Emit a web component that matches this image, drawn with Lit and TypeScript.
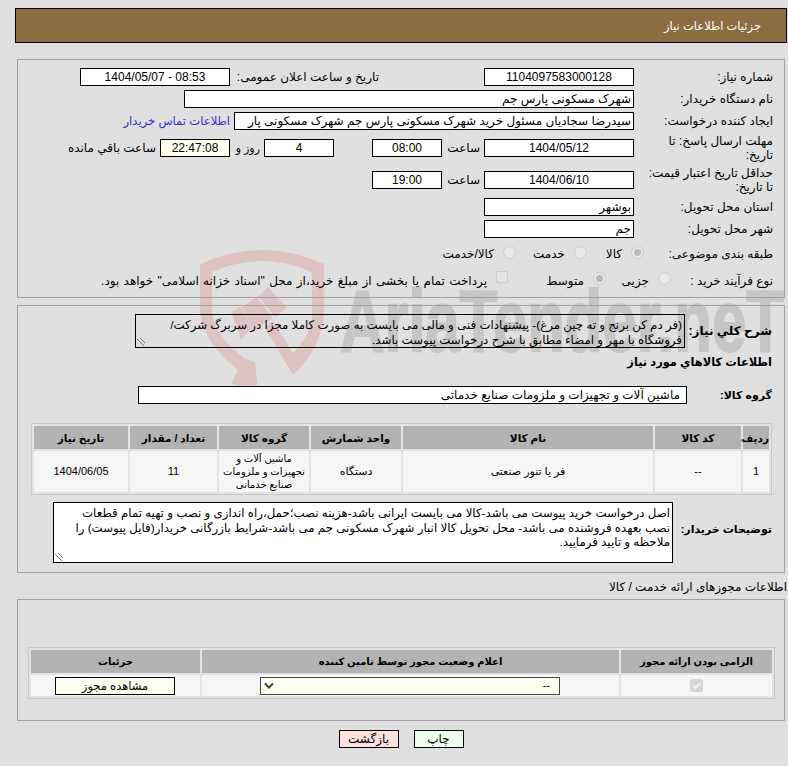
import { LitElement, html, css, svg } from "lit";
import { customElement } from "lit/decorators.js";

const goodsHead = ["ردیف", "کد کالا", "نام کالا", "واحد شمارش", "گروه کالا", "تعداد / مقدار", "تاریخ نیاز"];

@customElement("app-root")
export class AppRoot extends LitElement {
  static styles = css`
    :host {
      display: block;
      position: relative;
      width: 788px;
      height: 766px;
      overflow: hidden;
      background: #e0e0e0;
      font-family: "Liberation Sans", "DejaVu Sans", Tahoma, sans-serif;
      font-size: 12px;
      color: #000;
      direction: rtl;
    }
    .page {
      position: relative;
      display: flex;
      flex-direction: column;
      padding: 8px 1px 0 15px;
    }
    .header {
      height: 35px;
      box-sizing: border-box;
      background: #8c6d42;
      border: 1px solid #000;
      color: #fff;
      display: flex;
      align-items: center;
      padding-right: 25px;
      font-size: 11.5px;
    }
    .box {
      border: 1px solid #a0a0a0;
      margin: 0 2px;
      box-sizing: border-box;
    }
    .box1 {
      margin-top: 16px;
      height: 239px;
      padding-top: 6px;
    }
    .row {
      display: flex;
      align-items: center;
      height: 22px;
    }
    .row-tall { height: 32px; }
    .label {
      width: 150px;
      flex: none;
      box-sizing: border-box;
      padding: 0 11px 0 13px;
      line-height: 14px;
    }
    .field {
      background: #fff;
      border: 1px solid #000;
      height: 18px;
      box-sizing: border-box;
      line-height: 17px;
      white-space: nowrap;
      overflow: hidden;
      padding: 0 2px;
      flex: none;
    }
    .center { text-align: center; }
    .ltr { direction: ltr; }
    .w150 { width: 150px; }
    .w70 { width: 70px; }
    .buyer { width: 450px; }
    .creator { width: 400px; }
    .cream { background: #fffff0; }
    .spacer-announce { width: 105px; flex: none; }
    .announce { width: 149px; flex: none; white-space: nowrap; }
    .link { color: #3333cc; margin-right: 4px; white-space: nowrap; font-size: 11.6px; }
    .unit { width: 42px; box-sizing: border-box; padding-right: 4px; flex: none; }
    .gap38 { width: 38px; flex: none; }
    .days { width: 34px; box-sizing: border-box; padding-right: 4px; flex: none; white-space: nowrap; font-size: 11px; }
    .remain { margin-right: 4px; white-space: nowrap; }
    .row-kind { margin-top: 3px; }
    .row-process { margin-top: 5px; }
    .label-kind { width: 140px; }
    .label-process { width: 113px; padding-left: 0; white-space: nowrap; }
    .radio {
      width: 13px;
      height: 13px;
      border-radius: 50%;
      background: #e8e8e8;
      border: 1px solid #cdcdcd;
      box-sizing: border-box;
      flex: none;
      position: relative;
      top: -2px;
    }
    .row-process .radio { top: -3px; }
    .radio.on::after {
      content: "";
      position: absolute;
      inset: 2px;
      border-radius: 50%;
      background: #b9b9b9;
    }
    .opt { flex: none; box-sizing: border-box; padding-right: 9px; white-space: nowrap; }
    .o44 { width: 44px; }
    .o58 { width: 58px; }
    .o52 { width: 52px; }
    .o85 { width: 85px; }
    .check {
      width: 12px;
      height: 12px;
      border-radius: 2px;
      background: #e4e4e4;
      border: 1px solid #cdcdcd;
      box-sizing: border-box;
      flex: none;
      position: relative;
      top: -4px;
    }
    .pay { margin-right: 9px; white-space: nowrap; word-spacing: 1px; }
    .box2 {
      margin-top: 7px;
      height: 268px;
      padding-top: 8px;
    }
    .desc-row { display: flex; align-items: center; }
    .desc-label {
      flex: none;
      font-weight: bold;
      box-sizing: border-box;
      padding-right: 12px;
      white-space: nowrap;
    }
    .dl-short { width: 99px; }
    .dl-long { width: 111px; font-size: 11px; }
    .area {
      position: relative;
      border: 1px solid #000;
      box-sizing: border-box;
      font-size: 11.8px;
      line-height: 14.5px;
      padding: 3px 2px 0 2px;
      flex: none;
      white-space: nowrap;
    }
    .area.short { width: 550px; height: 34px; }
    .area.long { width: 620px; height: 61px; margin-top: 7px; background: #fff; }
    .grip {
      position: absolute;
      left: 1px;
      bottom: 1px;
      width: 8px;
      height: 8px;
    }
    .goods-title {
      font-weight: bold;
      font-size: 11.4px;
      padding-right: 12px;
      margin-top: 6px;
      line-height: 16px;
    }
    .group-row {
      display: flex;
      align-items: center;
      margin-top: 16px;
    }
    .group-label {
      width: 97px;
      box-sizing: border-box;
      padding-right: 12px;
      flex: none;
      font-weight: bold;
      font-size: 11px;
    }
    .group-field {
      width: 549px;
      height: 18px;
      box-sizing: border-box;
      background: #fff;
      border: 1px solid #000;
      line-height: 17px;
      padding-right: 6px;
    }
    .table {
      border: 1px solid #c8c8c8;
      border-spacing: 2px;
      border-collapse: separate;
      background: #e4e4e4;
      table-layout: fixed;
      font-size: 11px;
    }
    .table th {
      background: #b3b3b3;
      font-size: 10.5px;
      padding: 0;
      height: 23px;
      text-align: center;
    }
    .table td {
      background: #f6f6f6;
      text-align: center;
      padding: 0;
      line-height: 13px;
    }
    .goods {
      width: 741px;
      margin: 19px 12px 0 0;
    }
    .goods td { height: 41px; }
    .goods col:nth-child(1) { width: 26px; }
    .goods col:nth-child(2) { width: 86px; }
    .goods col:nth-child(3) { width: 250px; }
    .goods col:nth-child(4) { width: 90px; }
    .goods col:nth-child(5) { width: 90px; }
    .goods col:nth-child(6) { width: 87px; }
    .goods col:nth-child(7) { width: 94px; }
    .goods td.group { font-size: 10px; white-space: nowrap; }
    .subtitle {
      margin: 6px 0 4px 0;
      line-height: 16px;
    }
    .box3 {
      height: 122px;
      padding-top: 47px;
    }
    .licence {
      width: 747px;
      margin-right: 9px;
    }
    .licence th { font-size: 10px; }
    .licence td { height: 21px; }
    .licence td.shift { padding-right: 1px; }
    .licence col:nth-child(1) { width: 151px; }
    .licence col:nth-child(2) { width: 417px; }
    .licence col:nth-child(3) { width: 169px; }
    .select {
      display: flex;
      justify-content: space-between;
      align-items: center;
      width: 300px;
      height: 18px;
      margin: 0 auto;
      background: #fffff0;
      border: 1px solid #444;
      padding: 0 3px 0 3px;
      box-sizing: border-box;
    }
    .select span { padding-right: 6px; }
    .licence-btn {
      display: block;
      width: 120px;
      height: 18px;
      box-sizing: border-box;
      line-height: 17px;
      margin: 0 auto;
      background: #fffff0;
      border: 1px solid #000;
      font-size: 11.5px;
    }
    .cbx {
      display: block;
      margin: 0 auto;
      width: 13px;
      height: 13px;
    }
    .buttons {
      display: flex;
      justify-content: center;
      gap: 15px;
      margin-top: 9px;
    }
    .btn {
      height: 18px;
      box-sizing: border-box;
      line-height: 17px;
      border: 1px solid #000;
      text-align: center;
    }
    .btn.print { width: 50px; background: #efffef; }
    .btn.back { width: 60px; background: #ffe0e0; }
    .watermark {
      position: absolute;
      left: 0;
      top: 0;
    }
    .wm-text {
      position: absolute;
      left: 340px;
      top: 273px;
      direction: ltr;
      font-weight: bold;
      font-size: 88px;
      line-height: 96px;
      color: #c6c6c6;
      -webkit-text-stroke: 2px #c6c6c6;
      white-space: nowrap;
      transform: scaleX(0.7);
      transform-origin: left top;
    }
  `;

  private grip() {
    return html`<svg class="grip" viewBox="0 0 8 8">
      <path d="M0 1L7 8M3 0L8 5" stroke="#777" stroke-width="1" fill="none" />
    </svg>`;
  }

  // shield + arrow logo behind the form
  private shield() {
    return svg`
      <path fill="#dfc2c2" d="M200 264Q262 236 324 264L324 312Q322 348 293 375L265 328L273 321L293 353Q312 335 312 312L312 272Q262 250 212 272L212 312Q214 335 244 358L255 362L258 390L231 384L238 370Q205 345 200 312Z" />
      <path fill="#dfc2c2" d="M231 312L241 307L252 328L241 339ZM242 307L257 297L273 318L253 330ZM258 296L268 287L287 308L275 317Z" />
    `;
  }

  render() {
    return html`
      <svg class="watermark" width="788" height="766" viewBox="0 0 788 766">${this.shield()}</svg>
      <div class="wm-text">AriaTender.neT</div>
      <div class="page">
        <div class="header">جزئیات اطلاعات نیاز</div>

        <div class="box box1">
          <div class="row">
            <div class="label">شماره نیاز:</div>
            <div class="field center w150">1104097583000128</div>
            <div class="spacer-announce"></div>
            <div class="announce">تاریخ و ساعت اعلان عمومی:</div>
            <div class="field center ltr w150">1404/05/07 - 08:53</div>
          </div>
          <div class="row">
            <div class="label">نام دستگاه خریدار:</div>
            <div class="field buyer">شهرک مسکونی پارس جم</div>
          </div>
          <div class="row">
            <div class="label">ایجاد کننده درخواست:</div>
            <div class="field creator">سیدرضا سجادیان مسئول خرید شهرک مسکونی پارس جم شهرک مسکونی پار</div>
            <div class="link">اطلاعات تماس خریدار</div>
          </div>
          <div class="row row-tall">
            <div class="label">مهلت ارسال پاسخ: تا تاریخ:</div>
            <div class="field center w150">1404/05/12</div>
            <div class="unit">ساعت</div>
            <div class="field center w70">08:00</div>
            <div class="gap38"></div>
            <div class="field center w70">4</div>
            <div class="days">روز و</div>
            <div class="field center cream w70">22:47:08</div>
            <div class="remain">ساعت باقي مانده</div>
          </div>
          <div class="row row-tall">
            <div class="label">حداقل تاریخ اعتبار قیمت: تا تاریخ:</div>
            <div class="field center w150">1404/06/10</div>
            <div class="unit">ساعت</div>
            <div class="field center w70">19:00</div>
          </div>
          <div class="row">
            <div class="label">استان محل تحویل:</div>
            <div class="field w150">بوشهر</div>
          </div>
          <div class="row">
            <div class="label">شهر محل تحویل:</div>
            <div class="field w150">جم</div>
          </div>
          <div class="row row-kind">
            <div class="label label-kind">طبقه بندی موضوعی:</div>
            <span class="radio on"></span><span class="opt o44">کالا</span>
            <span class="radio"></span><span class="opt o58">خدمت</span>
            <span class="radio"></span><span class="opt">کالا/خدمت</span>
          </div>
          <div class="row row-process">
            <div class="label label-process">نوع فرآیند خرید :</div>
            <span class="radio"></span><span class="opt o52">جزیی</span>
            <span class="radio on"></span><span class="opt o85">متوسط</span>
            <span class="check"></span>
            <span class="pay">پرداخت تمام یا بخشی از مبلغ خرید،از محل "اسناد خزانه اسلامی" خواهد بود.</span>
          </div>
        </div>

        <div class="box box2">
          <div class="desc-row">
            <div class="desc-label dl-short">شرح كلي نیاز:</div>
            <div class="area short">
              (فر دم کن برنج و ته چین مرغ)- پیشنهادات فنی و مالی می بایست به صورت کاملا مجزا در سربرگ شرکت/<br />فروشگاه با مهر و امضاء مطابق با شرح درخواست پیوست باشد.
              ${this.grip()}
            </div>
          </div>
          <div class="goods-title">اطلاعات كالاهاي مورد نیاز</div>
          <div class="group-row">
            <div class="group-label">گروه کالا:</div>
            <div class="group-field">ماشین آلات و تجهیزات و ملزومات صنایع خدماتی</div>
          </div>
          <table class="table goods">
            <colgroup><col /><col /><col /><col /><col /><col /><col /></colgroup>
            <tr>${goodsHead.map((h) => html`<th>${h}</th>`)}</tr>
            <tr>
              <td>1</td><td>--</td><td>فر یا تنور صنعتی</td><td>دستگاه</td>
              <td class="group">ماشین آلات و<br />تجهیزات و ملزومات<br />صنایع خدماتی</td>
              <td>11</td><td>1404/06/05</td>
            </tr>
          </table>
          <div class="desc-row">
            <div class="desc-label dl-long">توضیحات خریدار:</div>
            <div class="area long">
              اصل درخواست خرید پیوست می باشد-کالا می بایست ایرانی باشد-هزینه نصب؛حمل،راه اندازی و نصب و تهیه تمام قطعات<br />نصب بعهده فروشنده می باشد- محل تحویل کالا انبار شهرک مسکونی جم می باشد-شرایط بازرگانی خریدار(فایل پیوست) را<br />ملاحظه و تایید فرمایید.
              ${this.grip()}
            </div>
          </div>
        </div>

        <div class="subtitle">اطلاعات مجوزهای ارائه خدمت / کالا</div>
        <div class="box box3">
          <table class="table licence">
            <colgroup><col /><col /><col /></colgroup>
            <tr><th>الزامی بودن ارائه مجوز</th><th>اعلام وضعیت مجوز توسط تامین کننده</th><th>جزئیات</th></tr>
            <tr>
              <td>
                <svg class="cbx" viewBox="0 0 13 13">
                  <rect width="13" height="13" rx="2" fill="#d6d6d6" />
                  <path d="M3 6.5L5.5 9L10 3.8" fill="none" stroke="#f4f4f4" stroke-width="2" />
                </svg>
              </td>
              <td class="shift">
                <div class="select">
                  <span>--</span>
                  <svg width="10" height="7" viewBox="0 0 10 7"><path d="M1 1.5L5 5.5L9 1.5" fill="none" stroke="#444" stroke-width="2" /></svg>
                </div>
              </td>
              <td class="shift"><span class="licence-btn">مشاهده مجوز</span></td>
            </tr>
          </table>
        </div>

        <div class="buttons">
          <div class="btn print">چاپ</div>
          <div class="btn back">بازگشت</div>
        </div>
      </div>
    `;
  }
}
